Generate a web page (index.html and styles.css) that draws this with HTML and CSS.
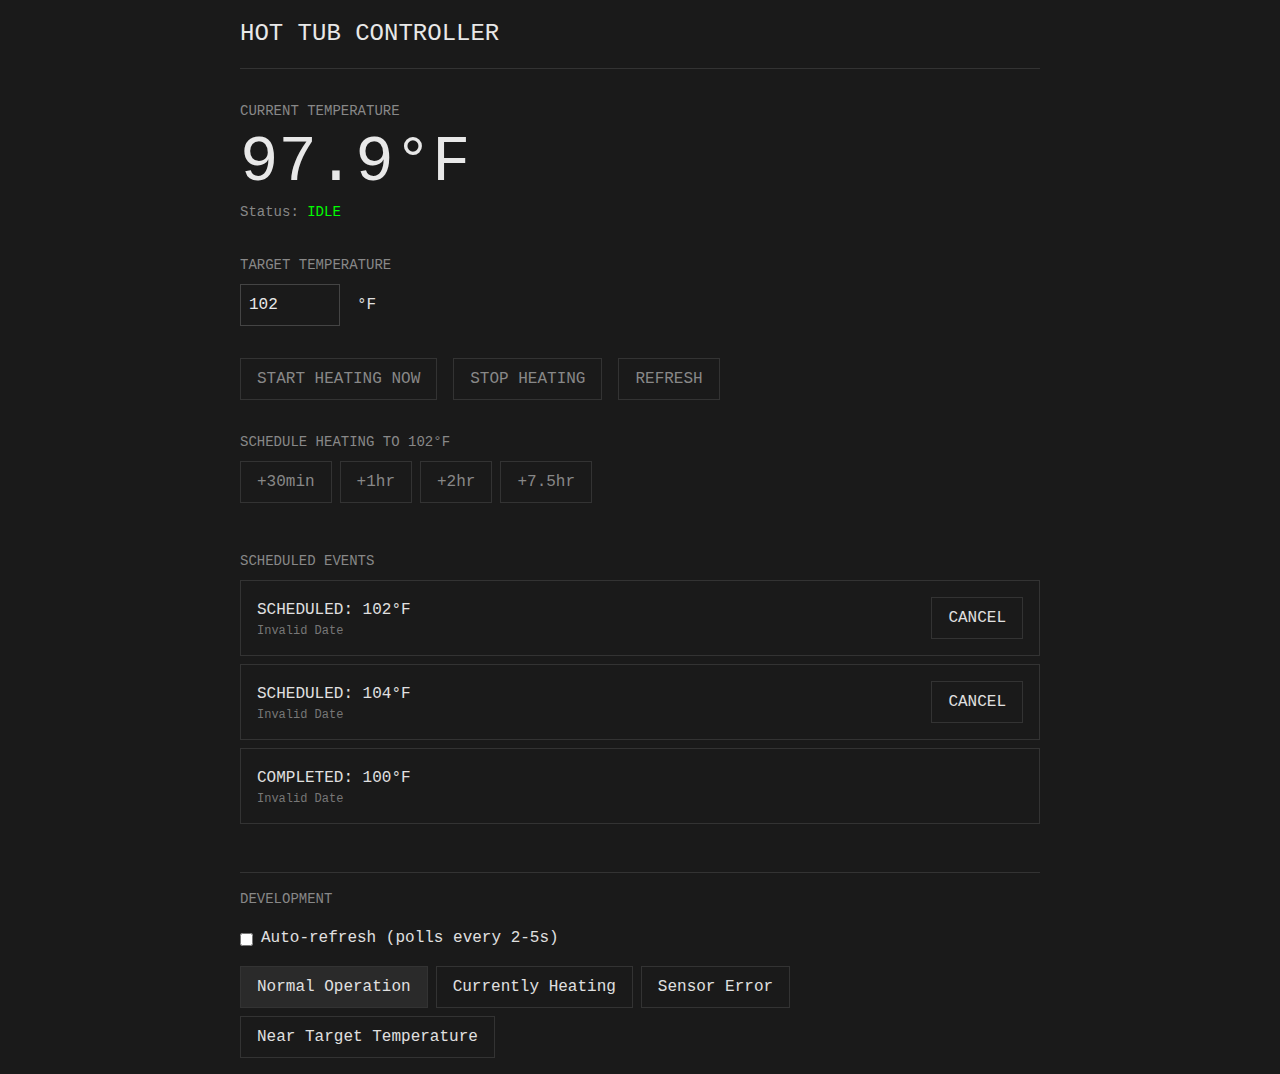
FILE: index.html
```html
<!DOCTYPE html>
<html lang="en">
<head>
<meta charset="utf-8">
<title>Hot Tub Controller</title>
<link rel="stylesheet" href="styles.css">
</head>
<body>
<main class="container">
  <h1 class="title">HOT TUB CONTROLLER</h1>

  <section class="current">
    <div class="label">CURRENT TEMPERATURE</div>
    <div class="temp">97.9°F</div>
    <div class="status">Status: <span class="status-idle">IDLE</span></div>
  </section>

  <section class="target">
    <div class="label">TARGET TEMPERATURE</div>
    <div class="target-row">
      <input class="target-input" type="text" value="102">
      <span class="unit">°F</span>
    </div>
  </section>

  <div class="actions">
    <button class="btn btn-muted">START HEATING NOW</button>
    <button class="btn btn-muted">STOP HEATING</button>
    <button class="btn btn-muted">REFRESH</button>
  </div>

  <section class="schedule">
    <div class="label">SCHEDULE HEATING TO 102°F</div>
    <div class="quick">
      <button class="btn btn-muted">+30min</button>
      <button class="btn btn-muted">+1hr</button>
      <button class="btn btn-muted">+2hr</button>
      <button class="btn btn-muted">+7.5hr</button>
    </div>
  </section>

  <section class="events">
    <div class="label">SCHEDULED EVENTS</div>
    <div class="event-list">
      <div class="event">
        <div class="event-info">
          <div class="event-title">SCHEDULED: 102°F</div>
          <div class="event-date">Invalid Date</div>
        </div>
        <button class="btn btn-light">CANCEL</button>
      </div>
      <div class="event">
        <div class="event-info">
          <div class="event-title">SCHEDULED: 104°F</div>
          <div class="event-date">Invalid Date</div>
        </div>
        <button class="btn btn-light">CANCEL</button>
      </div>
      <div class="event">
        <div class="event-info">
          <div class="event-title">COMPLETED: 100°F</div>
          <div class="event-date">Invalid Date</div>
        </div>
      </div>
    </div>
  </section>

  <section class="dev">
    <div class="label">DEVELOPMENT</div>
    <label class="check-row"><input type="checkbox" class="check"> Auto-refresh (polls every 2-5s)</label>
    <div class="dev-buttons">
      <button class="btn btn-light btn-active">Normal Operation</button>
      <button class="btn btn-light">Currently Heating</button>
      <button class="btn btn-light">Sensor Error</button>
      <button class="btn btn-light">Near Target Temperature</button>
    </div>
  </section>
</main>
</body>
</html>
```

FILE: styles.css
```css
* { box-sizing: border-box; }

html, body {
  margin: 0;
  padding: 0;
  background: #1a1a1a;
  color: #e0e0e0;
  font-family: "Liberation Mono", "DejaVu Sans Mono", monospace;
}

.container {
  width: 800px;
  margin: 0 auto;
  padding: 19px 0 40px;
}

.title {
  margin: 0;
  font-size: 24px;
  font-weight: normal;
  line-height: 30px;
  color: #e8e8e8;
  padding-bottom: 19px;
  border-bottom: 1px solid #333;
}

.label {
  font-size: 14px;
  line-height: 22px;
  color: #888;
}

.current {
  margin-top: 31px;
}

.temp {
  font-size: 64px;
  line-height: 64px;
  color: #e8e8e8;
  margin-top: 9px;
}

.status {
  margin-top: 6px;
  font-size: 14px;
  line-height: 22px;
  color: #888;
}

.status-idle { color: #00ff00; }

.target { margin-top: 31px; }

.target-row {
  display: flex;
  align-items: center;
  gap: 17px;
  margin-top: 8px;
}

.target-input {
  width: 100px;
  height: 42px;
  padding: 0 8px;
  background: #1a1a1a;
  border: 1px solid #444;
  border-radius: 0;
  color: #e8e8e8;
  font-family: inherit;
  font-size: 16px;
  outline: none;
}

.unit {
  font-size: 16px;
  color: #e0e0e0;
}

.btn {
  height: 42px;
  padding: 0 16px;
  background: transparent;
  border: 1px solid #333;
  border-radius: 0;
  font-family: inherit;
  font-size: 16px;
  line-height: 20px;
  cursor: pointer;
}

.btn-muted { color: #888; }
.btn-light { color: #e0e0e0; }
.btn-active { background: #2a2a2a; }

.actions {
  display: flex;
  gap: 16px;
  margin-top: 32px;
}

.schedule { margin-top: 31px; }

.quick {
  display: flex;
  gap: 8px;
  margin-top: 8px;
}

.events { margin-top: 47px; }

.event-list {
  display: flex;
  flex-direction: column;
  gap: 8px;
  margin-top: 8px;
}

.event {
  display: flex;
  align-items: center;
  justify-content: space-between;
  min-height: 76px;
  padding: 16px;
  border: 1px solid #333;
}

.event-info {
  display: flex;
  flex-direction: column;
}

.event-title {
  font-size: 16px;
  line-height: 26px;
  color: #e0e0e0;
}

.event-date {
  font-size: 12px;
  line-height: 16px;
  color: #777;
}

.dev {
  margin-top: 48px;
  padding-top: 15px;
  border-top: 1px solid #333;
}

.check-row {
  display: flex;
  align-items: center;
  gap: 8px;
  margin-top: 18px;
  font-size: 16px;
  line-height: 20px;
  color: #e0e0e0;
}

.check {
  margin: 2px 0 0 0;
  width: 13px;
  height: 13px;
}

.dev-buttons {
  display: flex;
  flex-wrap: wrap;
  gap: 8px;
  margin-top: 18px;
  max-width: 560px;
}
```
